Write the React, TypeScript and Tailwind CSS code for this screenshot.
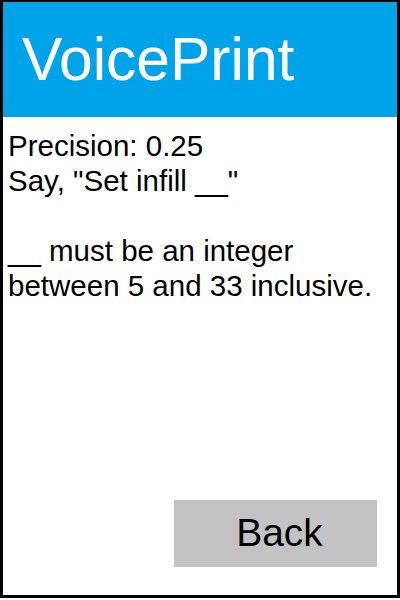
export default function App() {
  return (
    <div className="h-[598px] w-[400px] bg-white">
      <div className="flex h-full w-full flex-col border-[3px] border-t-[2px] border-black font-['Liberation_Sans',Arial,sans-serif]">
        <header className="h-[115px] shrink-0 bg-[#00a2e8] pl-[19px] pt-[27px]">
          <h1 className="text-[60.5px] leading-[60px] text-white">VoicePrint</h1>
        </header>
        <main className="flex-1 pl-[5px] pt-[11px] text-[29.5px] leading-[35px] text-black">
          <p>Precision: 0.25</p>
          <p>Say, "Set infill __"</p>
          <p>&nbsp;</p>
          <p>__ must be an integer</p>
          <p>between 5 and 33 inclusive.</p>
        </main>
        <div className="flex justify-end pb-[28px] pr-[20px]">
          <button className="flex h-[67px] w-[203px] items-center justify-center bg-[#c3c3c3] pl-[8px] text-[39px] text-black">
            Back
          </button>
        </div>
      </div>
    </div>
  );
}
